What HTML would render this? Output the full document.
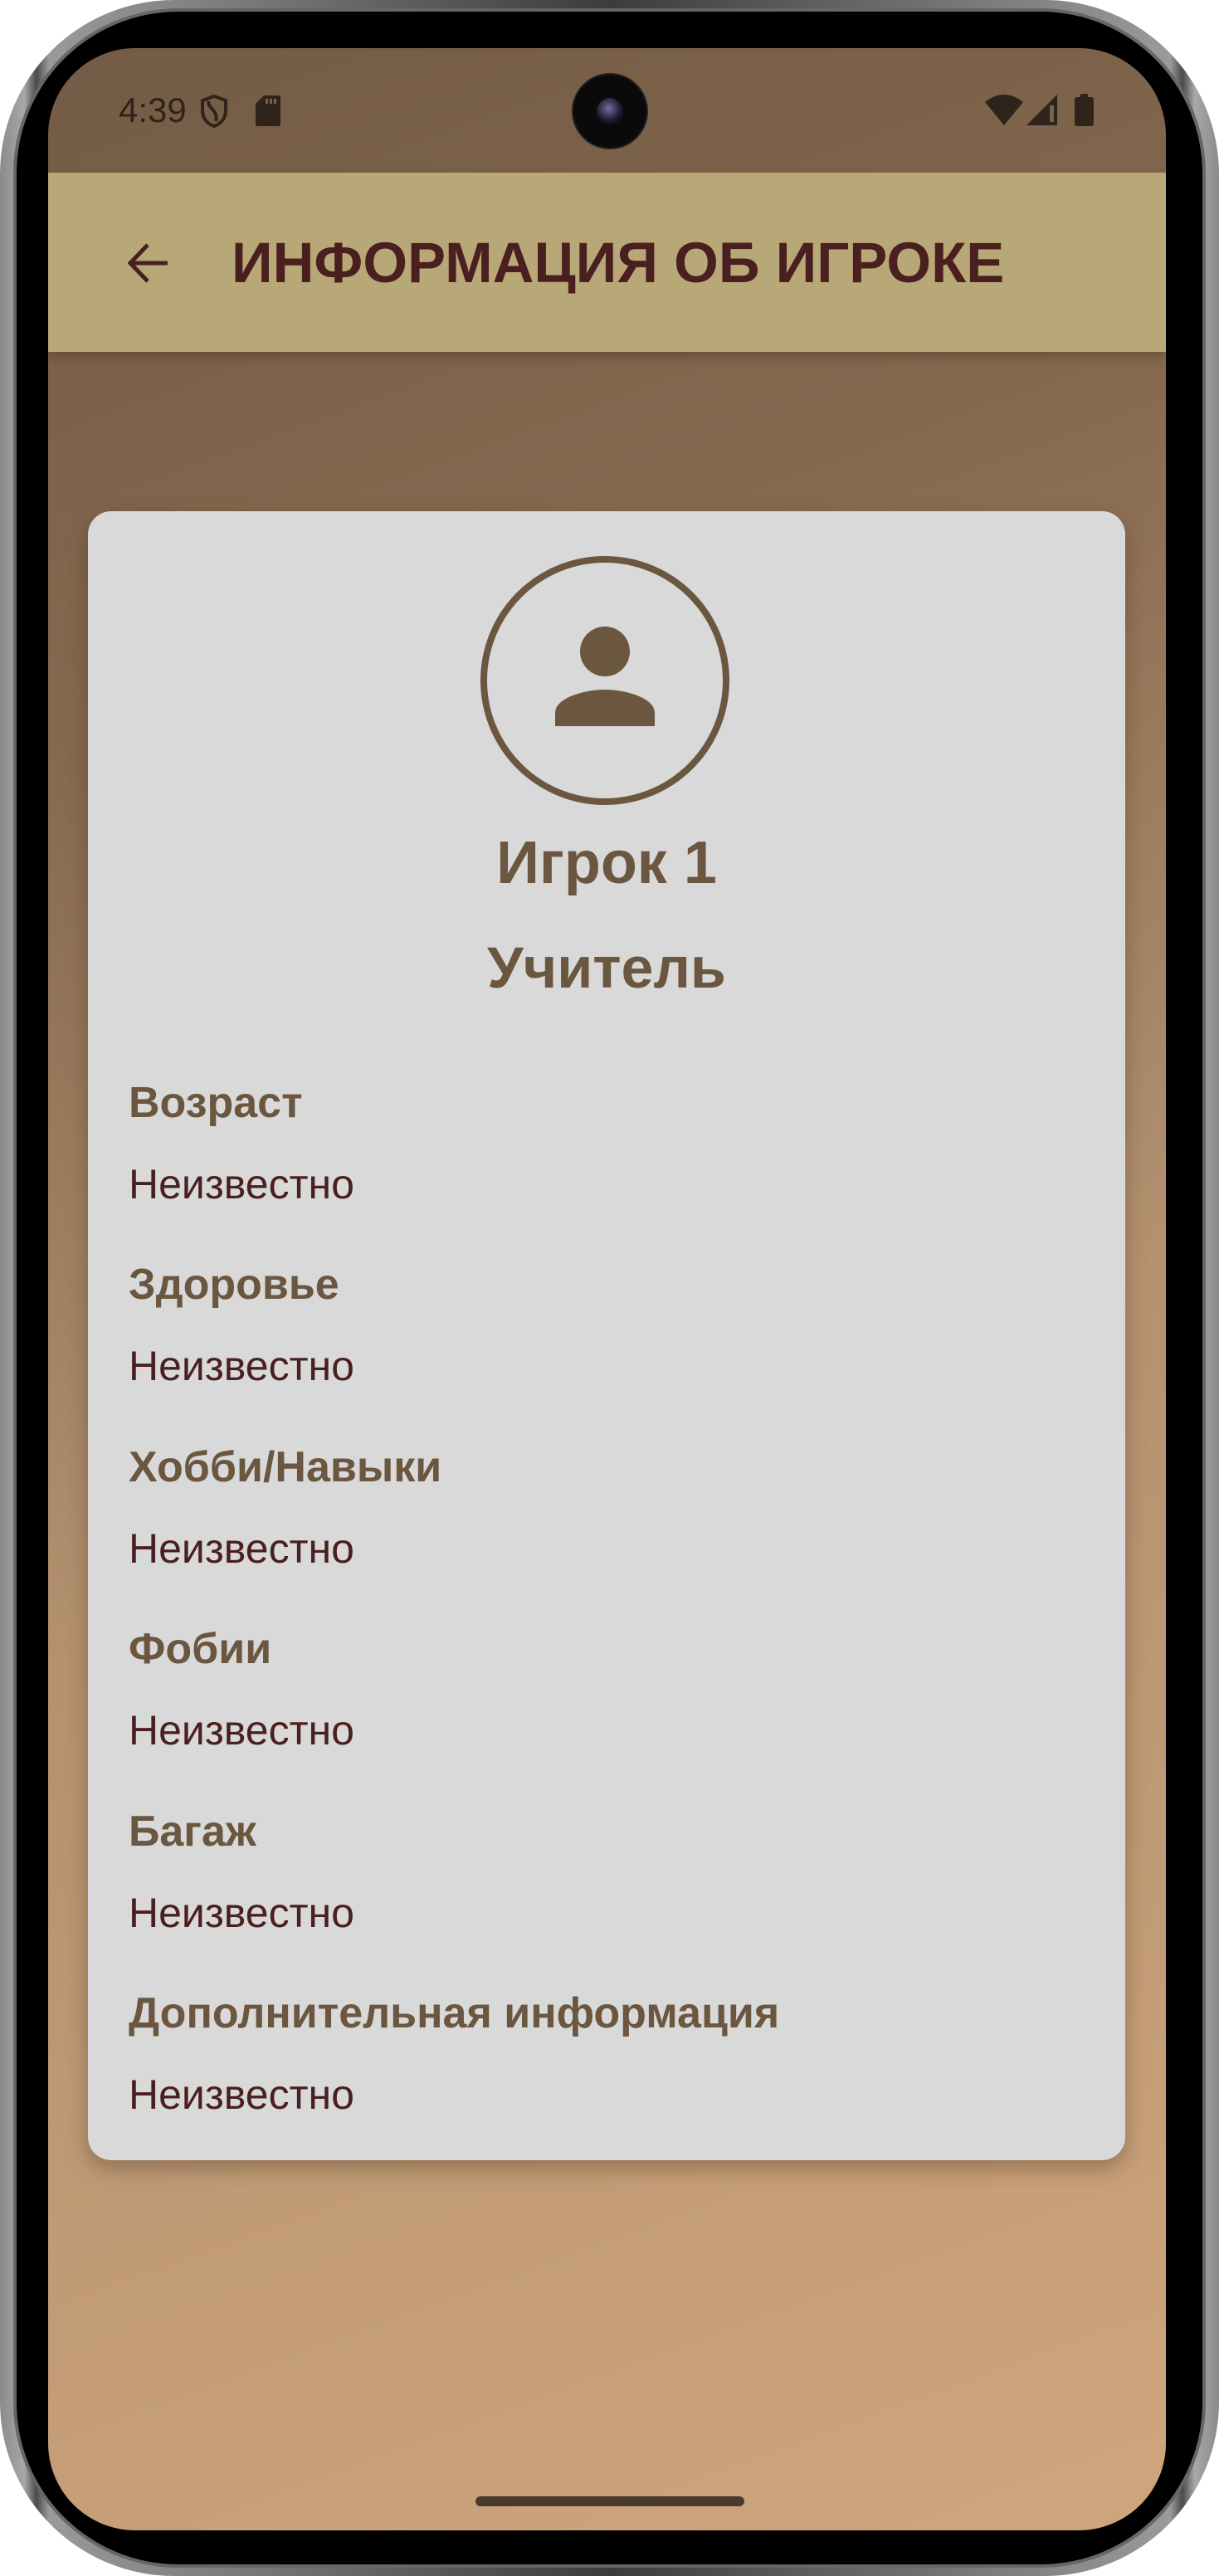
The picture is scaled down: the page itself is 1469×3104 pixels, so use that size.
<!DOCTYPE html>
<html><head><meta charset="utf-8"><style>
*{margin:0;padding:0;box-sizing:border-box}
html,body{width:1469px;height:3104px;background:#fff;overflow:hidden}
body{position:relative;font-family:"Liberation Sans","Noto Sans CJK SC",sans-serif}
.frame{position:absolute;left:0;top:0;width:1469px;height:3104px;border-radius:210px;background:linear-gradient(90deg,#8a8a8a,#a8a8a8 2%,#4a4a4a 3%,#9a9a9a 4%,#3c3c3c 50%,#9a9a9a 96%,#4a4a4a 97%,#a8a8a8 98%,#8a8a8a)}
.bezel{position:absolute;left:20px;top:14px;right:20px;bottom:14px;border-radius:195px;background:#000;box-shadow:0 0 0 4px #666}
.screen{position:absolute;left:58px;top:58px;width:1347px;height:2991px;border-radius:105px;overflow:hidden;background:linear-gradient(160deg,#735b45 0%,#86694f 25%,#b3916f 55%,#cfa57d 100%)}
.abs{position:absolute}
.appbar{left:0;top:150px;width:1347px;height:216px;background:#b9a877;box-shadow:0 6px 12px rgba(60,40,20,.35)}
.title{left:221px;top:224px;font-size:69px;font-weight:bold;color:#4a1f1f;line-height:1;white-space:nowrap}
.card{left:48px;top:558px;width:1250px;height:1987px;background:#d9d9d9;border-radius:28px;box-shadow:0 10px 24px rgba(60,40,20,.35)}
.c{color:#6b5640;font-weight:bold;line-height:1;white-space:nowrap}
.lab{position:absolute;left:49px;font-size:52px;color:#6b5640;font-weight:bold;line-height:1;white-space:nowrap}
.val{position:absolute;left:49px;font-size:50px;color:#4a1f1f;line-height:1;white-space:nowrap}
</style></head><body>
<div class="frame"></div>
<div class="bezel"></div>
<div class="screen">
  <div class="abs" style="left:85px;top:54px;font-size:42px;color:#2e241b;line-height:1">4:39</div>
  <svg class="abs" style="left:182px;top:55px" width="36" height="42" viewBox="0 0 36 42"><path d="M18 3 L32 8 V20 C32 30 26 36 18 39 C10 36 4 30 4 20 V8 Z" fill="none" stroke="#2e241b" stroke-width="4"/><path d="M12 9 C8 16 24 20 20 33" fill="none" stroke="#2e241b" stroke-width="4"/></svg>
  <svg class="abs" style="left:250px;top:57px" width="30" height="37" viewBox="0 0 30 37"><path d="M10 0 H27 Q30 0 30 3 V34 Q30 37 27 37 H3 Q0 37 0 34 V10 Z" fill="#2e241b"/><rect x="12" y="4" width="3" height="6" fill="#7a6149"/><rect x="17" y="4" width="3" height="6" fill="#7a6149"/><rect x="22" y="4" width="3" height="6" fill="#7a6149"/></svg>
  <div class="abs" style="left:633px;top:32px;width:88px;height:88px;border-radius:50%;background:#0a0a0a;box-shadow:0 0 0 2px #222"><div style="position:absolute;left:28px;top:28px;width:32px;height:32px;border-radius:50%;background:radial-gradient(circle at 45% 40%,#7a6a9a,#1b1b30 55%,#050505)"></div></div>
  <svg class="abs" style="left:1129px;top:55px" width="46" height="38" viewBox="0 0 46 38"><path d="M0 10 Q23 -8 46 10 L23 38 Z" fill="#2e241b"/></svg>
  <svg class="abs" style="left:1179px;top:56px" width="37" height="37" viewBox="0 0 37 37"><path d="M37 0 V37 H0 Z" fill="#2e241b"/><rect x="28" y="13" width="5" height="20" fill="#7a6149"/></svg>
  <svg class="abs" style="left:1237px;top:55px" width="23" height="39" viewBox="0 0 23 39"><rect x="7" y="0" width="9" height="5" fill="#2e241b"/><rect x="0" y="4" width="23" height="35" rx="3" fill="#2e241b"/></svg>
  <div class="abs appbar"></div>
  <svg class="abs" style="left:96px;top:234px" width="50" height="50" viewBox="0 0 50 50"><path d="M48 25 H4 M24 3 L3 25 L24 47" fill="none" stroke="#4a1f1f" stroke-width="5"/></svg>
  <div class="abs title">ИНФОРМАЦИЯ ОБ ИГРОКЕ</div>
  <div class="abs card">
    <svg class="abs" style="left:468px;top:49px" width="310" height="310" viewBox="0 0 310 310"><circle cx="155" cy="155" r="146" fill="none" stroke="#6b5640" stroke-width="8"/><circle cx="155" cy="120" r="30" fill="#6b5640"/><path d="M95 210 V194 C95 176 130 166 155 166 C180 166 215 176 215 194 V210 Z" fill="#6b5640"/></svg>
    <div class="abs c" style="left:0;width:1250px;text-align:center;top:388px;font-size:72px">Игрок 1</div>
    <div class="abs c" style="left:0;width:1250px;text-align:center;top:515px;font-size:70px">Учитель</div>
    <div class="lab" style="top:687px">Возраст</div><div class="val" style="top:786px">Неизвестно</div>
    <div class="lab" style="top:906px">Здоровье</div><div class="val" style="top:1005px">Неизвестно</div>
    <div class="lab" style="top:1126px">Хобби/Навыки</div><div class="val" style="top:1225px">Неизвестно</div>
    <div class="lab" style="top:1345px">Фобии</div><div class="val" style="top:1444px">Неизвестно</div>
    <div class="lab" style="top:1565px">Багаж</div><div class="val" style="top:1664px">Неизвестно</div>
    <div class="lab" style="top:1784px">Дополнительная информация</div><div class="val" style="top:1883px">Неизвестно</div>
  </div>
  <div class="abs" style="left:515px;top:2950px;width:324px;height:12px;border-radius:6px;background:#4a3a2c"></div>
</div>
</body></html>
